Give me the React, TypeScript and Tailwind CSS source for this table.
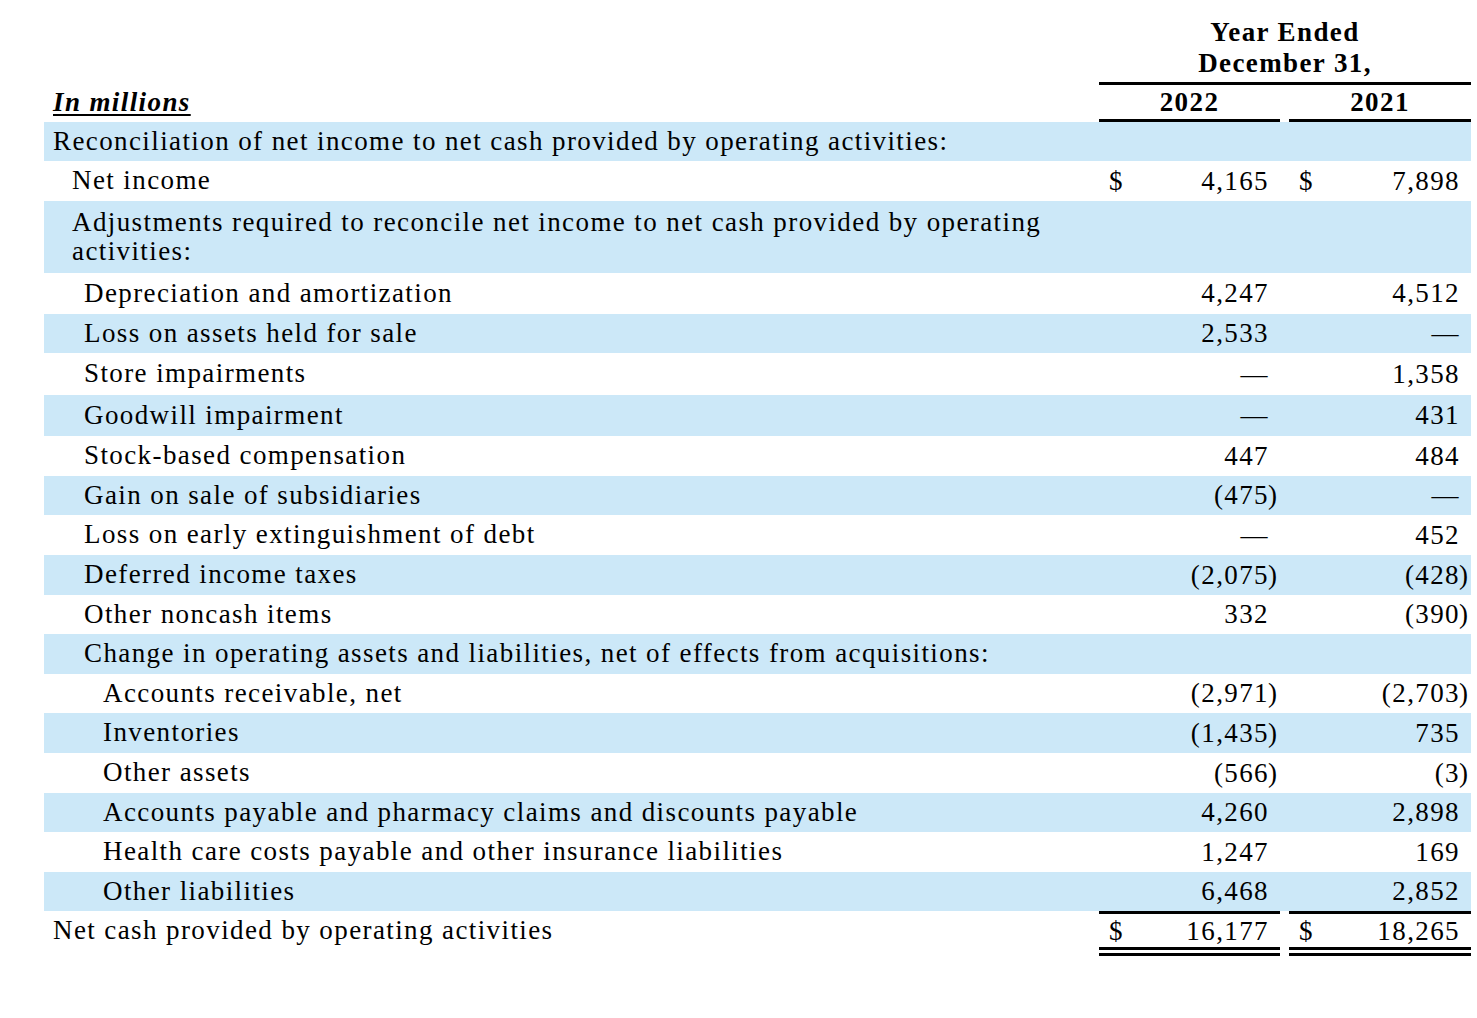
import React from "react";

type Row = {
  label: string;
  indent: string;
  h: string;
  blue?: boolean;
  a?: string;
  b?: string;
  dollar?: boolean;
  total?: boolean;
};

const rows: Row[] = [
  { label: "Reconciliation of net income to net cash provided by operating activities:", indent: "pl-[9px]", h: "h-[39px]", blue: true },
  { label: "Net income", indent: "pl-[28px]", h: "h-[40px]", a: "4,165", b: "7,898", dollar: true },
  { label: "Adjustments required to reconcile net income to net cash provided by operating activities:", indent: "pl-[28px]", h: "h-[72px]", blue: true },
  { label: "Depreciation and amortization", indent: "pl-[40px]", h: "h-[41px]", a: "4,247", b: "4,512" },
  { label: "Loss on assets held for sale", indent: "pl-[40px]", h: "h-[39px]", blue: true, a: "2,533", b: "—" },
  { label: "Store impairments", indent: "pl-[40px]", h: "h-[42px]", a: "—", b: "1,358" },
  { label: "Goodwill impairment", indent: "pl-[40px]", h: "h-[41px]", blue: true, a: "—", b: "431" },
  { label: "Stock-based compensation", indent: "pl-[40px]", h: "h-[40px]", a: "447", b: "484" },
  { label: "Gain on sale of subsidiaries", indent: "pl-[40px]", h: "h-[39px]", blue: true, a: "(475)", b: "—" },
  { label: "Loss on early extinguishment of debt", indent: "pl-[40px]", h: "h-[40px]", a: "—", b: "452" },
  { label: "Deferred income taxes", indent: "pl-[40px]", h: "h-[40px]", blue: true, a: "(2,075)", b: "(428)" },
  { label: "Other noncash items", indent: "pl-[40px]", h: "h-[39px]", a: "332", b: "(390)" },
  { label: "Change in operating assets and liabilities, net of effects from acquisitions:", indent: "pl-[40px]", h: "h-[40px]", blue: true },
  { label: "Accounts receivable, net", indent: "pl-[59px]", h: "h-[39px]", a: "(2,971)", b: "(2,703)" },
  { label: "Inventories", indent: "pl-[59px]", h: "h-[40px]", blue: true, a: "(1,435)", b: "735" },
  { label: "Other assets", indent: "pl-[59px]", h: "h-[40px]", a: "(566)", b: "(3)" },
  { label: "Accounts payable and pharmacy claims and discounts payable", indent: "pl-[59px]", h: "h-[39px]", blue: true, a: "4,260", b: "2,898" },
  { label: "Health care costs payable and other insurance liabilities", indent: "pl-[59px]", h: "h-[40px]", a: "1,247", b: "169" },
  { label: "Other liabilities", indent: "pl-[59px]", h: "h-[39px]", blue: true, a: "6,468", b: "2,852" },
  { label: "Net cash provided by operating activities", indent: "pl-[9px]", h: "h-[36px]", a: "16,177", b: "18,265", dollar: true, total: true },
];

function Amount({ value, dollar, total }: { value?: string; dollar?: boolean; total?: boolean }) {
  const neg = value?.startsWith("(");
  const num = neg ? value!.slice(0, -1) : value;
  return (
    <div
      className={`flex h-full items-center pl-[10px] ${
        total ? "border-t-[3px] border-black" : "pb-[1px]"
      }`}
    >
      <span className="w-[14px]">{dollar ? "$" : ""}</span>
      <span className="mr-[-1px] flex-1 text-right">{num}</span>
      <span className="w-[12px] text-left">{neg ? ")" : ""}</span>
    </div>
  );
}

export default function App() {
  return (
    <div className="min-h-[1018px] w-[1477px] bg-white text-black [font-family:'Liberation_Serif','Times_New_Roman',serif] text-[27px] leading-[30px] tracking-[1.4px]">
      <div className="w-[1471px] pl-[44px]">
        {/* header */}
        <div className="grid h-[122px] grid-cols-[1055px_181px_9px_182px] font-bold">
          <div className="flex items-end pb-[5px] pl-[9px]">
            <span className="italic underline underline-offset-[3px] decoration-2">In millions</span>
          </div>
          <div className="col-span-3 flex flex-col">
            <div className="flex h-[82px] flex-col items-center justify-end pb-[3px] leading-[31px]">
              <span>Year Ended</span>
              <span>December 31,</span>
            </div>
            <div className="h-[3px] bg-black" />
            <div className="grid flex-1 grid-cols-[181px_9px_182px]">
              <div className="flex flex-col">
                <div className="flex flex-1 items-center justify-center">2022</div>
                <div className="h-[3px] bg-black" />
              </div>
              <div />
              <div className="flex flex-col">
                <div className="flex flex-1 items-center justify-center">2021</div>
                <div className="h-[3px] bg-black" />
              </div>
            </div>
          </div>
        </div>

        {rows.map((r) => (
          <div
            key={r.label}
            className={`grid grid-cols-[1055px_181px_9px_182px] ${r.h} ${r.blue ? "bg-[#cce8f8]" : ""}`}
          >
            <div className={`flex items-center ${r.total ? "pt-[3px]" : "pb-[1px]"} ${r.indent}`}>
              <span className="leading-[29px]">{r.label}</span>
            </div>
            <Amount value={r.a} dollar={r.dollar} total={r.total} />
            <div />
            <Amount value={r.b} dollar={r.dollar} total={r.total} />
          </div>
        ))}

        {/* double underline */}
        <div className="grid grid-cols-[1055px_181px_9px_182px]">
          <div />
          <div className="flex flex-col gap-[3px]">
            <div className="h-[3px] bg-black" />
            <div className="h-[3px] bg-black" />
          </div>
          <div />
          <div className="flex flex-col gap-[3px]">
            <div className="h-[3px] bg-black" />
            <div className="h-[3px] bg-black" />
          </div>
        </div>
      </div>
    </div>
  );
}
